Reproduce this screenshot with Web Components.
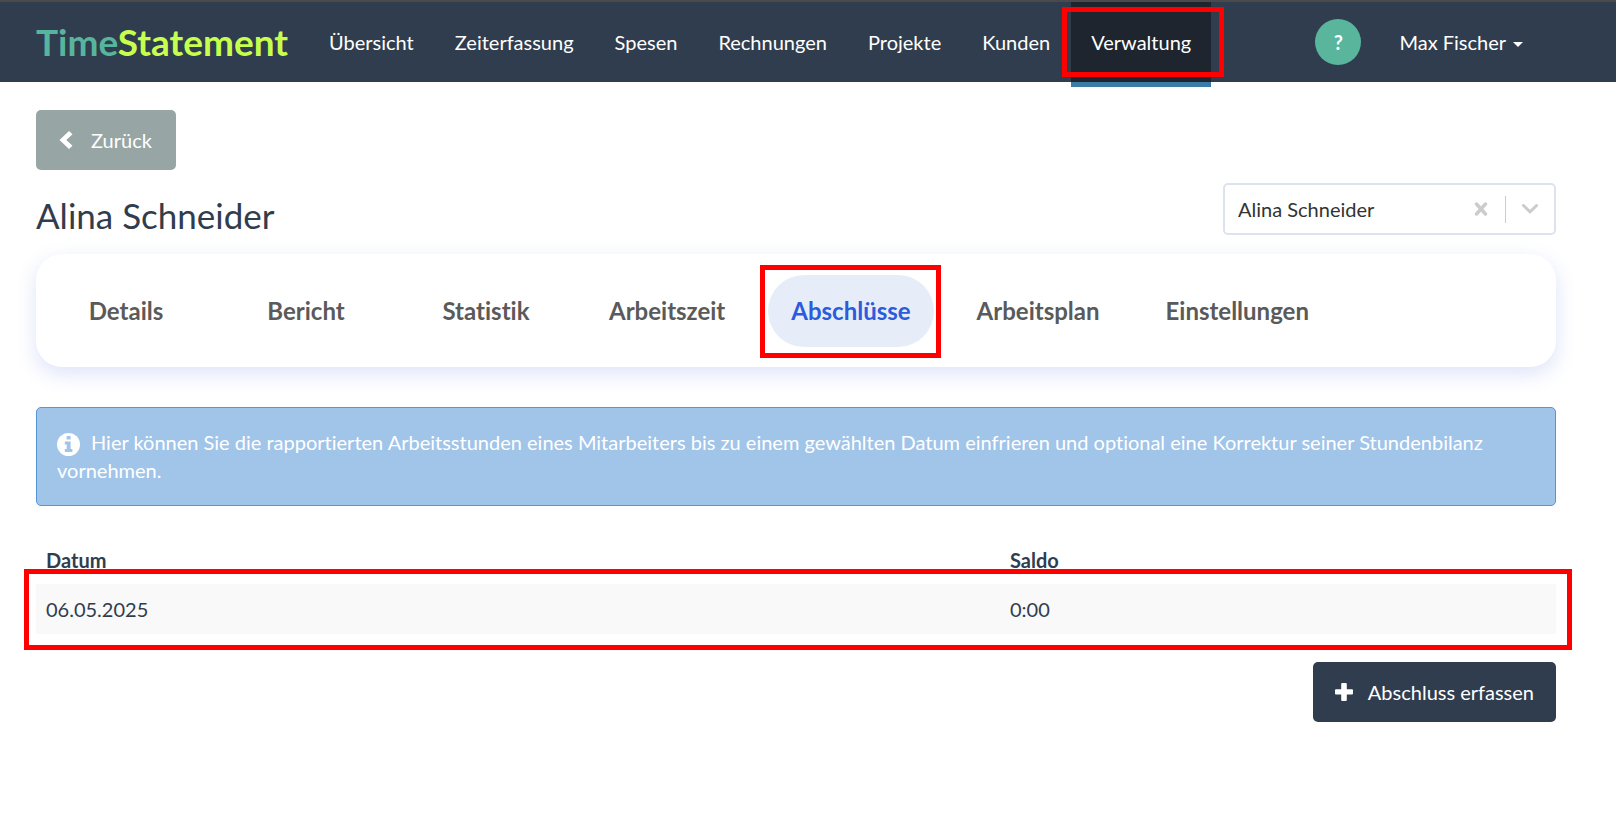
<!DOCTYPE html>
<html lang="de">
<head>
<meta charset="utf-8">
<meta name="viewport" content="width=device-width, initial-scale=1">
<title>TimeStatement – Abschlüsse</title>
<style>
  body {
    margin: 0;
    background: #fff;
    color: #303d4e;
    font: 20px/28px Lato, "Liberation Sans", sans-serif;
    font-variant-ligatures: none;
    --navy: #303d4e;
    --mark: #fe0000;
  }
  main { padding: 28px 60px 40px 36px; }
  .head { display: flex; justify-content: space-between; align-items: flex-start; padding-top: 13px; }
  h1 { margin: 10px 0 0; font-size: 35px; line-height: 44px; font-weight: 400; }
  ts-tabs { margin-top: 17px; }
  ts-alert { margin-top: 40px; }
  ts-table { margin-top: 30px; }
  .actions { display: flex; justify-content: flex-end; margin-top: 28px; }
</style>
</head>
<body>
<ts-navbar>
  <ts-logo slot="brand"></ts-logo>
  <ts-nav-item href="#uebersicht">Übersicht</ts-nav-item>
  <ts-nav-item href="#zeiterfassung">Zeiterfassung</ts-nav-item>
  <ts-nav-item href="#spesen">Spesen</ts-nav-item>
  <ts-nav-item href="#rechnungen">Rechnungen</ts-nav-item>
  <ts-nav-item href="#projekte">Projekte</ts-nav-item>
  <ts-nav-item href="#kunden">Kunden</ts-nav-item>
  <ts-nav-item href="#verwaltung" active>Verwaltung</ts-nav-item>
  <ts-user-menu slot="user">Max Fischer</ts-user-menu>
</ts-navbar>
<main>
  <ts-button icon="back">Zurück</ts-button>
  <div class="head">
    <h1>Alina Schneider</h1>
    <ts-select value="Alina Schneider" label="Mitarbeiter"></ts-select>
  </div>
  <ts-tabs>
    <ts-tab href="#details">Details</ts-tab>
    <ts-tab href="#bericht">Bericht</ts-tab>
    <ts-tab href="#statistik">Statistik</ts-tab>
    <ts-tab href="#arbeitszeit">Arbeitszeit</ts-tab>
    <ts-tab href="#abschluesse" active>Abschlüsse</ts-tab>
    <ts-tab href="#arbeitsplan">Arbeitsplan</ts-tab>
    <ts-tab href="#einstellungen">Einstellungen</ts-tab>
  </ts-tabs>
  <ts-alert>Hier können Sie die rapportierten Arbeitsstunden eines Mitarbeiters bis zu einem gewählten Datum einfrieren und optional eine Korrektur seiner Stundenbilanz vornehmen.</ts-alert>
  <ts-table></ts-table>
  <div class="actions"><ts-button icon="plus" primary>Abschluss erfassen</ts-button></div>
</main>
<script>
const define = (name, html) => {
  customElements.define(name, class extends HTMLElement {
    constructor() {
      super();
      const at = n => this.getAttribute(n) || '';
      this.attachShadow({ mode: 'open' }).innerHTML = typeof html === 'function' ? html(at) : html;
    }
  });
};

define('ts-navbar', `
<style>
  :host { display: block; }
  header { display: flex; align-items: center; height: 80px; border-top: 2px solid #4a4a4a;
    background: var(--navy); padding: 0 93px 0 36px; color: #fff; }
  nav { display: flex; gap: 1px; align-self: stretch; margin-left: 21px; }
  .user { margin-left: auto; }
</style>
<header>
  <slot name="brand"></slot>
  <nav><slot></slot></nav>
  <div class="user"><slot name="user"></slot></div>
</header>`);

define('ts-logo', `
<style>
  :host { display: block; font-size: 37px; line-height: 44px; font-weight: 700; }
  a { text-decoration: none; color: #c6ff4d; }
  span { color: #58b59d; }
</style>
<a href="#home"><span>Time</span>Statement</a>`);

define('ts-nav-item', at => `
<style>
  :host { display: block; position: relative; }
  a { display: flex; align-items: center; height: 80px; padding: 0 20px; color: #fff; text-decoration: none; }
  :host([active]) a { background: #1e252e; border-bottom: 5px solid #3a7ca5; }
  :host([active])::after { content: ""; position: absolute; inset: 5px -13px 5px -9px; border: 5px solid var(--mark); }
</style>
<a href="${at('href')}"><slot></slot></a>`);

define('ts-user-menu', `
<style>
  :host { display: flex; align-items: center; gap: 38px; }
  button { border: 0; padding: 0; background: none; color: #fff; font: inherit; cursor: pointer; }
  .help { width: 46px; height: 46px; border-radius: 50%; background: #5ab59d; font-weight: 700; }
  .menu { display: flex; align-items: center; gap: 7px; }
  svg { display: block; margin-top: 4px; }
</style>
<button class="help" aria-label="Hilfe">?</button>
<button class="menu" aria-haspopup="true"><slot></slot><svg width="10" height="5" aria-hidden="true"><path d="M0 0h10L5 5z" fill="#fff"/></svg></button>`);

const icons = {
  back: '<svg width="14" height="20" viewBox="0 0 14 20"><path d="M10 1l3.5 3.3L7.3 10l6.2 5.7L10 19 .5 10z" fill="#fff"/></svg>',
  plus: '<svg width="18" height="20" viewBox="0 0 18 20"><path d="M7.2 1h3.6q1 0 1 1v5.200h5.200q1 0 1 1v3.200q0 1-1 1h-5.200v5.600q0 1-1 1H7.200q-1 0-1-1v-5.600H1q-1 0-1-1V8.200q0-1 1-1h5.200V2q0-1 1-1z" fill="#fff"/></svg>'
};

define('ts-button', at => `
<style>
  :host { display: inline-flex; }
  button { display: flex; align-items: center; min-width: 140px; height: 60px; padding: 0 22px; border: 0; border-radius: 5px;
    background: #98a5a5; color: #fff; font: inherit; cursor: pointer; }
  :host([primary]) button { background: var(--navy); }
  svg { display: block; margin-right: 15px; }
  :host([icon="back"]) svg { margin: 0 18px 0 1px; }
</style>
<button type="button">${icons[at('icon')]}<slot></slot></button>`);

define('ts-select', at => `
<style>
  :host { display: flex; align-items: center; box-sizing: border-box; width: 333px; height: 52px;
    border: 2px solid #dce3ee; border-radius: 5px; background: #fff; padding-right: 16px; }
  select { flex: 1; min-width: 0; height: 100%; padding: 0 0 0 13px; border: 0; background: none;
    appearance: none; color: #333; font: inherit; }
  button { border: 0; padding: 0; background: none; cursor: pointer; }
  svg { display: block; }
  i { width: 1px; height: 27px; background: #ccc; margin: 0 16px 0 17px; }
</style>
<select aria-label="${at('label')}"><option>${at('value')}</option></select>
<button type="button" aria-label="Auswahl löschen"><svg width="14" height="14" viewBox="0 0 14 14"><path d="M2.500 2l9 10M11.500 2l-9 10" stroke="#ccc" stroke-width="3.400" stroke-linecap="round"/></svg></button>
<i></i>
<svg width="16" height="10" viewBox="0 0 16 10" aria-hidden="true"><path d="M1.500 1.500L8 7.800l6.500-6.300" fill="none" stroke="#ccc" stroke-width="3" stroke-linecap="round" stroke-linejoin="round"/></svg>`);

define('ts-tabs', `
<style>
  :host { display: block; border-radius: 26px; background: #fff; padding: 21px 10px 20px;
    box-shadow: 0 7px 20px rgba(60, 90, 220, .17); }
  nav { display: flex; gap: 20px; }
</style>
<nav><slot></slot></nav>`);

define('ts-tab', at => `
<style>
  :host { display: block; position: relative; }
  a { display: flex; align-items: center; justify-content: center; box-sizing: border-box; min-width: 160px; height: 72px;
    padding: 0 23px; border-radius: 36px; color: #5a5a5a; font-size: 24px; font-weight: 700; text-decoration: none; }
  :host([active]) a { background: #e6edf8; color: #2c5bdc; }
  :host([active])::after { content: ""; position: absolute; inset: -10px -7px -11px -8px; border: 5px solid var(--mark); }
</style>
<a href="${at('href')}"><slot></slot></a>`);

define('ts-alert', `
<style>
  :host { display: block; border: 1px solid #5596d5; border-radius: 5px; background: #a1c4e9; color: #fff; padding: 20px 20px 21px; }
  svg { vertical-align: -6px; margin-right: 11px; }
</style>
<div role="note"><svg width="23" height="23" viewBox="0 0 23 23" aria-hidden="true"><circle cx="11.500" cy="11.500" r="11.500" fill="#fff"/><path d="M9.600 3h4v3.400h-4zM7.800 8.500h5.800v7.600h1.800v2.900H7.800v-2.900h1.900v-4.700H7.800z" fill="#a1c4e9"/></svg><slot></slot></div>`);

define('ts-table', `
<style>
  :host { display: block; }
  table { width: 100%; table-layout: fixed; border-collapse: collapse; }
  .saldo { width: 556px; }
  th, td { text-align: left; padding: 0 10px; }
  th { height: 48px; }
  td { height: 50px; }
  tbody tr { position: relative; background: #f9f9f9; }
  tbody td:first-child::after { content: ""; position: absolute; inset: -15px -16px -16px -12px; border: 5px solid var(--mark); }
</style>
<table>
  <colgroup><col><col class="saldo"></colgroup>
  <thead><tr><th scope="col">Datum</th><th scope="col">Saldo</th></tr></thead>
  <tbody><tr><td>06.05.2025</td><td>0:00</td></tr></tbody>
</table>`);
</script>
</body>
</html>
